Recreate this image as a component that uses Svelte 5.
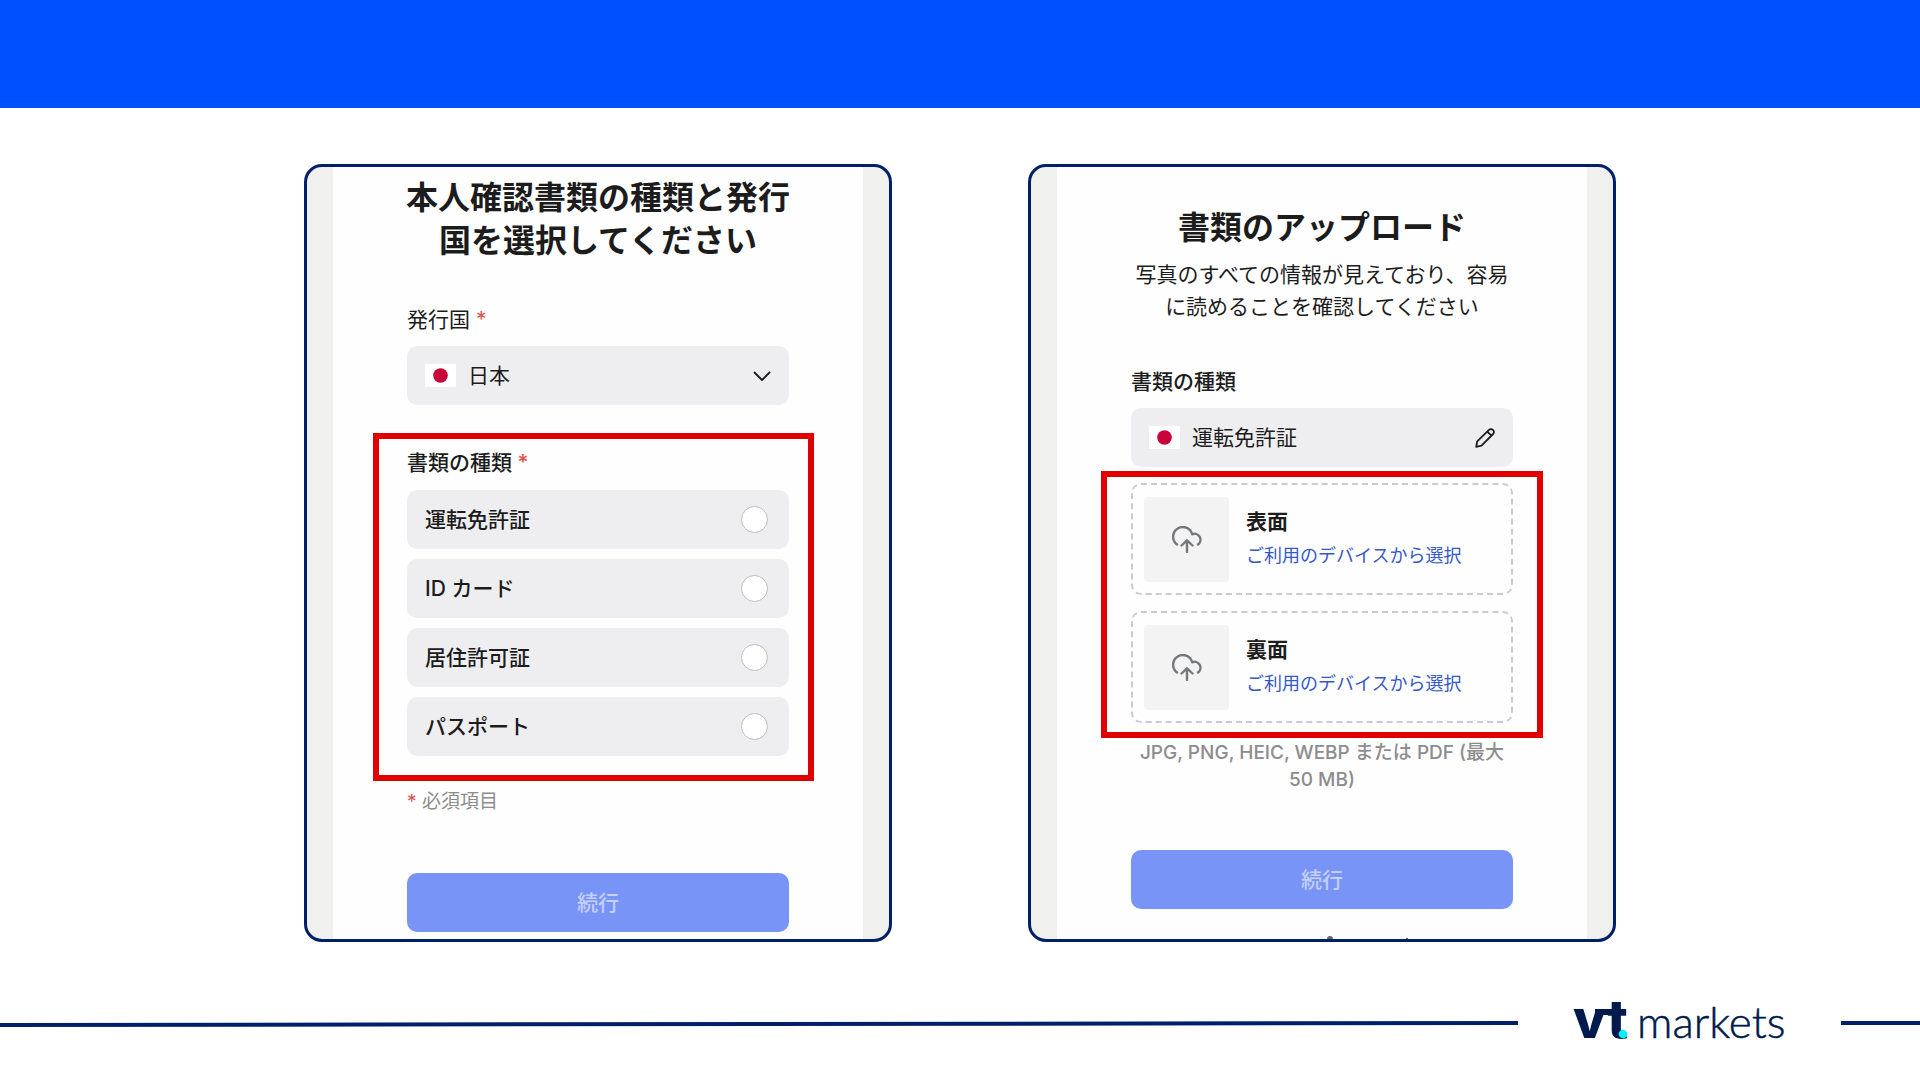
<script lang="ts">
  interface DocType {
    id: string;
    label: string;
  }

  const docTypes: DocType[] = [
    { id: 'license', label: '運転免許証' },
    { id: 'id-card', label: 'ID カード' },
    { id: 'residence', label: '居住許可証' },
    { id: 'passport', label: 'パスポート' },
  ];

  const sides = ['表面', '裏面'];

  let selected = $state('');
</script>

{#snippet flag()}
  <svg class="flag" viewBox="0 0 31 23" aria-hidden="true">
    <rect width="31" height="23" rx="1" fill="#fff" />
    <circle cx="15.5" cy="11.5" r="7.3" fill="#c8043b" />
  </svg>
{/snippet}

<div class="page">
  <header class="banner"></header>

  <main class="screens">
    <section class="phone">
      <div class="sheet first">
        <h1>本人確認書類の種類と発行国を選択してください</h1>

        <label class="label" for="country">発行国 <span class="req">*</span></label>
        <div class="field">
          {@render flag()}
          <select id="country">
            <option>日本</option>
          </select>
          <svg class="chevron" viewBox="0 0 18 10" aria-hidden="true">
            <path d="M1 1l8 8 8-8" />
          </svg>
        </div>

        <fieldset class="marked types">
          <legend class="label medium">書類の種類 <span class="req">*</span></legend>
          <div class="options">
            {#each docTypes as doc}
              <label class="option">
                <span>{doc.label}</span>
                <input type="radio" name="doc" value={doc.id} bind:group={selected} />
              </label>
            {/each}
          </div>
        </fieldset>

        <p class="note"><span class="req">*</span> 必須項目</p>
        <button class="next" type="button">続行</button>
      </div>
    </section>

    <section class="phone">
      <div class="sheet second">
        <h1>書類のアップロード</h1>
        <p class="lead">写真のすべての情報が見えており、容易に読めることを確認してください</p>

        <div class="label medium">書類の種類</div>
        <button class="field" type="button">
          {@render flag()}
          <span class="value">運転免許証</span>
          <svg class="pencil" viewBox="0 0 20 20" aria-hidden="true">
            <path d="M1.2 18.8l1-5.4L14 1.9a2.7 2.7 0 0 1 3.9 0l.2.2a2.7 2.7 0 0 1 0 3.9L6.5 17.6z" />
            <path d="M12.3 3.6l4.1 4.1" />
          </svg>
        </button>

        <div class="marked uploads">
          {#each sides as side}
            <div class="drop">
              <div class="thumb">
                <svg viewBox="0 0 30 27" aria-hidden="true">
                  <path d="M5 18.5A9.7 9.7 0 1 1 20.2 8.3A5.900 5.900 0 0 1 26 18.5" />
                  <path d="M15 26V14.5M9.5 19.5l5.500-5.200 5.500 5.200" />
                </svg>
              </div>
              <div class="drop-text">
                <strong>{side}</strong>
                <a href="#upload">ご利用のデバイスから選択</a>
              </div>
            </div>
          {/each}
        </div>

        <p class="formats">JPG, PNG, HEIC, WEBP または PDF (最大 50 MB)</p>
        <button class="next" type="button">続行</button>
        <svg class="badge" viewBox="0 0 180 4" aria-hidden="true">
          <path d="M95 4a3 3 0 0 1 6 0zM174 3h2v1h-2z" />
        </svg>
      </div>
    </section>
  </main>

  <footer>
    <svg class="rule long" viewBox="0 0 100 8" preserveAspectRatio="none" aria-hidden="true">
      <path d="M0 4L100 2V6L0 8z" />
    </svg>
    <svg class="logo" viewBox="0 0 216 50" role="img" aria-label="vt markets">
      <text class="mark" x="0" y="40">vt</text>
      <rect x="22" y="11" width="18" height="6" />
      <circle cx="50" cy="36" r="4.3" fill="#00f0ff" />
      <text class="word" x="64" y="40">markets</text>
    </svg>
    <span class="rule short"></span>
  </footer>
</div>

<style>
  :global(body) {
    margin: 0;
    background: #fff;
  }
  .page {
    display: flex;
    flex-direction: column;
    min-height: 100vh;
    font-family: Inter, 'Noto Sans CJK JP', sans-serif;
    font-size: 21px;
    line-height: 30px;
    color: #1c1c1c;
  }
  .page * {
    box-sizing: border-box;
  }
  .banner {
    height: 108px;
    background: #0050ff;
  }
  .screens {
    display: flex;
    justify-content: center;
    gap: 136px;
    padding-top: 56px;
  }
  .phone {
    width: 588px;
    height: 778px;
    overflow: hidden;
    border: 3px solid #001f6b;
    border-radius: 18px;
    background: #f0f0ef;
    padding: 0 26px;
  }
  .sheet {
    height: 100%;
    background: #fefefe;
    display: flex;
    flex-direction: column;
    padding: 0 74px;
  }
  .first {
    padding-top: 9px;
  }
  .second {
    padding-top: 39px;
  }
  h1 {
    margin: 0 -2px;
    font-size: 32px;
    line-height: 43px;
    font-weight: 700;
    text-align: center;
    word-break: break-all;
  }
  .label {
    line-height: 30px;
  }
  .medium {
    font-weight: 500;
  }
  .req {
    color: #e0504c;
  }
  .first > .label {
    margin: 43px 0 11px;
  }
  .field,
  .option {
    display: flex;
    align-items: center;
    width: 100%;
    height: 59px;
    flex-shrink: 0;
    border: 0;
    border-radius: 10px;
    background: #eeeef0;
    padding: 0 18px;
    font: inherit;
    color: inherit;
    text-align: left;
  }
  .flag {
    width: 31px;
    height: 23px;
    margin-right: 12px;
    flex-shrink: 0;
  }
  select {
    appearance: none;
    flex: 1;
    border: 0;
    padding: 0;
    background: none;
    font: inherit;
    color: inherit;
  }
  .value {
    flex: 1;
  }
  .chevron,
  .pencil {
    fill: none;
    stroke: #1c1c1c;
    stroke-width: 1.8;
    stroke-linejoin: round;
  }
  .chevron {
    width: 18px;
    height: 10px;
  }
  .pencil {
    width: 20px;
    height: 20px;
  }
  .marked {
    border: 6px solid #e00000;
  }
  .types {
    min-width: 0;
    margin: 28px -25px 0 -34px;
    padding: 9px 19px 19px 28px;
  }
  /* floated so the legend sits inside the frame */
  legend {
    float: left;
    width: 100%;
    padding: 0;
    margin-bottom: 12px;
  }
  .options {
    clear: both;
    display: flex;
    flex-direction: column;
    gap: 10px;
  }
  .option {
    font-weight: 500;
    justify-content: space-between;
    padding-right: 21px;
  }
  input {
    appearance: none;
    width: 27px;
    height: 27px;
    margin: 0;
    border: 1px solid #bdbdbd;
    border-radius: 50%;
    background: #fff;
  }
  input:checked {
    border: 8px solid #7994f7;
  }
  .note {
    margin: 6px 0 56px;
    font-size: 19px;
    color: #8c8c8c;
  }
  .next {
    height: 59px;
    flex-shrink: 0;
    border: 0;
    border-radius: 10px;
    background: #7994f7;
    color: #c5d0fb;
    font: inherit;
    font-weight: 500;
  }
  .lead {
    margin: 10px -2px 44px;
    line-height: 32px;
    text-align: center;
    word-break: break-all;
  }
  .second .field {
    margin-top: 11px;
  }
  .uploads {
    margin: 4px -30px 0;
    display: flex;
    flex-direction: column;
    gap: 16px;
    padding: 6px 24px 9px;
  }
  .drop {
    display: flex;
    align-items: center;
    gap: 17px;
    height: 112px;
    padding: 0 11px;
    border: 2px dashed #cbcbcb;
    border-radius: 10px;
  }
  .thumb {
    display: grid;
    place-items: center;
    width: 85px;
    height: 85px;
    border-radius: 4px;
    background: #f3f3f3;
  }
  .thumb svg {
    width: 30px;
    height: 27px;
    fill: none;
    stroke: #75787b;
    stroke-width: 2.4;
    stroke-linecap: round;
    stroke-linejoin: round;
  }
  .drop-text {
    display: flex;
    flex-direction: column;
    gap: 4px;
  }
  .drop-text strong {
    font-weight: 700;
  }
  .drop-text a {
    font-size: 18px;
    color: #3458c8;
    text-decoration: none;
  }
  .formats {
    margin: 1px 0 57px;
    font-size: 19px;
    line-height: 27px;
    font-weight: 500;
    text-align: center;
    color: #8c8c8c;
  }
  .badge {
    width: 180px;
    height: 4px;
    flex-shrink: 0;
    margin-top: 26px;
    align-self: center;
    fill: #666;
  }
  footer {
    display: flex;
    align-items: center;
    margin-top: 56px;
  }
  .rule {
    background: #001f6b;
  }
  .long {
    flex: 1;
    height: 8px;
    background: none;
    fill: #001f6b;
  }
  .short {
    width: 79px;
    height: 4px;
  }
  .logo {
    width: 216px;
    height: 50px;
    margin: 0 52px 0 55px;
    overflow: visible;
    fill: #001a4d;
  }
  .mark {
    font: 800 54px Inter, sans-serif;
  }
  .word {
    font: 300 44px Lato, sans-serif;
    stroke: #001a4d;
    stroke-width: 0.5;
  }
</style>
